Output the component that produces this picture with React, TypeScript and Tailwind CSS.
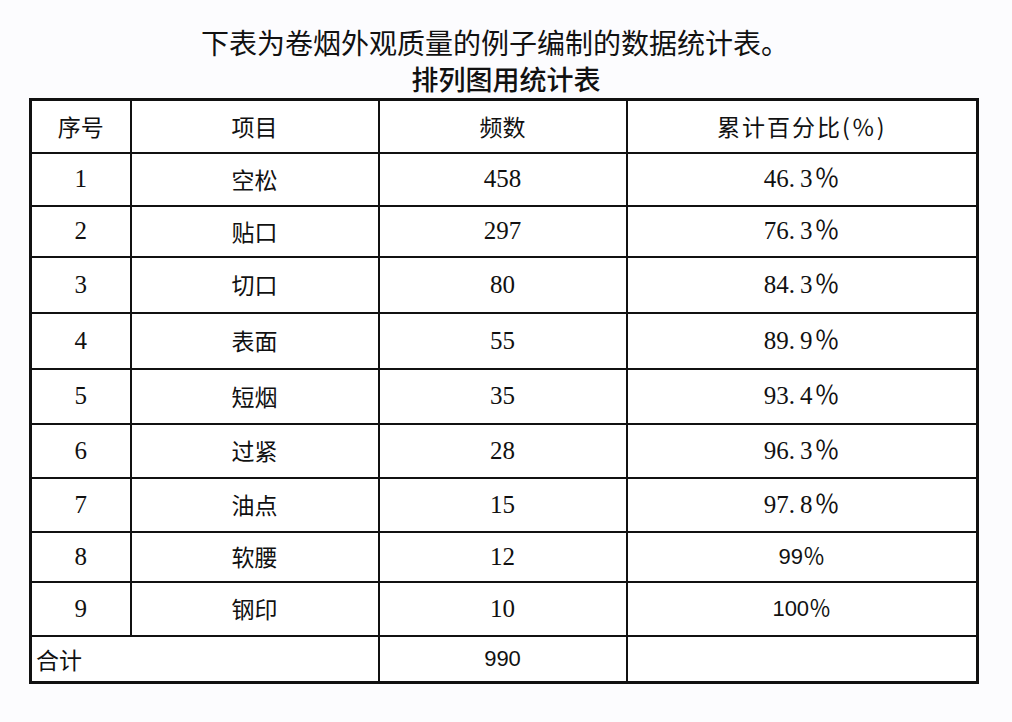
import React from 'react';

interface Row {
  no: string;
  item: string;
  count: string;
  pct: string;
  h: string;
  sansPct?: boolean;
}

const rows: Row[] = [
  { no: '1', item: '空松', count: '458', pct: '46.3％', h: 'h-[53px]' },
  { no: '2', item: '贴口', count: '297', pct: '76.3％', h: 'h-[51px]' },
  { no: '3', item: '切口', count: '80', pct: '84.3％', h: 'h-[56px]' },
  { no: '4', item: '表面', count: '55', pct: '89.9％', h: 'h-[56px]' },
  { no: '5', item: '短烟', count: '35', pct: '93.4％', h: 'h-[55px]' },
  { no: '6', item: '过紧', count: '28', pct: '96.3％', h: 'h-[54px]' },
  { no: '7', item: '油点', count: '15', pct: '97.8％', h: 'h-[54px]' },
  { no: '8', item: '软腰', count: '12', pct: '99％', h: 'h-[50px]', sansPct: true },
  { no: '9', item: '钢印', count: '10', pct: '100％', h: 'h-[54px]', sansPct: true },
];

const cjk = "font-['Noto_Sans_CJK_SC','Noto_Sans',sans-serif]";
// SimSun-like digits: Times widths, CJK fallback for the full-width ％
const serif = "font-['Liberation_Serif','Noto_Sans_CJK_SC',serif]";
const sans = "font-['Liberation_Sans','Noto_Sans_CJK_SC',sans-serif]";

// the source table puts a wide gap after the decimal point
function Pct({ value }: { value: string }) {
  const [a, b] = value.split('.');
  if (b === undefined) return <>{value}</>;
  return (
    <>
      {a}.<span className="ml-[5px]">{b.replace('％', '')}</span>
      <span className="ml-[2px]">％</span>
    </>
  );
}

export default function App() {
  return (
    <div className={`w-[1012px] h-[722px] bg-[#fcfcfe] text-[#111] ${cjk}`}>
      <div className="pt-[22px] flex flex-col items-center">
        <h1 className="text-[28px] leading-[40px] font-normal pr-[22px]">
          下表为卷烟外观质量的例子编制的数据统计表。
        </h1>
        <h2 className="text-[27px] leading-[34px] font-medium">排列图用统计表</h2>
      </div>

      <table className="mt-[2px] ml-[29px] w-[950px] border-collapse border-[3px] border-[#111] bg-white table-fixed">
        <colgroup>
          <col className="w-[100px]" />
          <col className="w-[248px]" />
          <col className="w-[248px]" />
          <col />
        </colgroup>
        <tbody>
          <tr className="h-[53px] text-[23px]">
            <td className="border-2 border-[#111] text-center">序号</td>
            <td className="border-2 border-[#111] text-center">项目</td>
            <td className="border-2 border-[#111] text-center">频数</td>
            <td className="border-2 border-[#111] text-center tracking-[2px]">累计百分比(％)</td>
          </tr>
          {rows.map((r) => (
            <tr key={r.no} className={r.h}>
              <td className={`border-2 border-[#111] text-center text-[25px] ${serif}`}>{r.no}</td>
              <td className="border-2 border-[#111] text-center text-[23px]">{r.item}</td>
              <td className={`border-2 border-[#111] text-center text-[25px] ${serif}`}>{r.count}</td>
              <td
                className={`border-2 border-[#111] text-center ${
                  r.sansPct ? `text-[22px] ${sans}` : `text-[25px] ${serif}`
                }`}
              >
                <Pct value={r.pct} />
              </td>
            </tr>
          ))}
          <tr className="h-[47px]">
            <td colSpan={2} className="border-2 border-[#111] text-left pl-[4px] text-[23px]">
              合计
            </td>
            <td className={`border-2 border-[#111] text-center text-[22px] ${sans}`}>990</td>
            <td className="border-2 border-[#111]" />
          </tr>
        </tbody>
      </table>
    </div>
  );
}
